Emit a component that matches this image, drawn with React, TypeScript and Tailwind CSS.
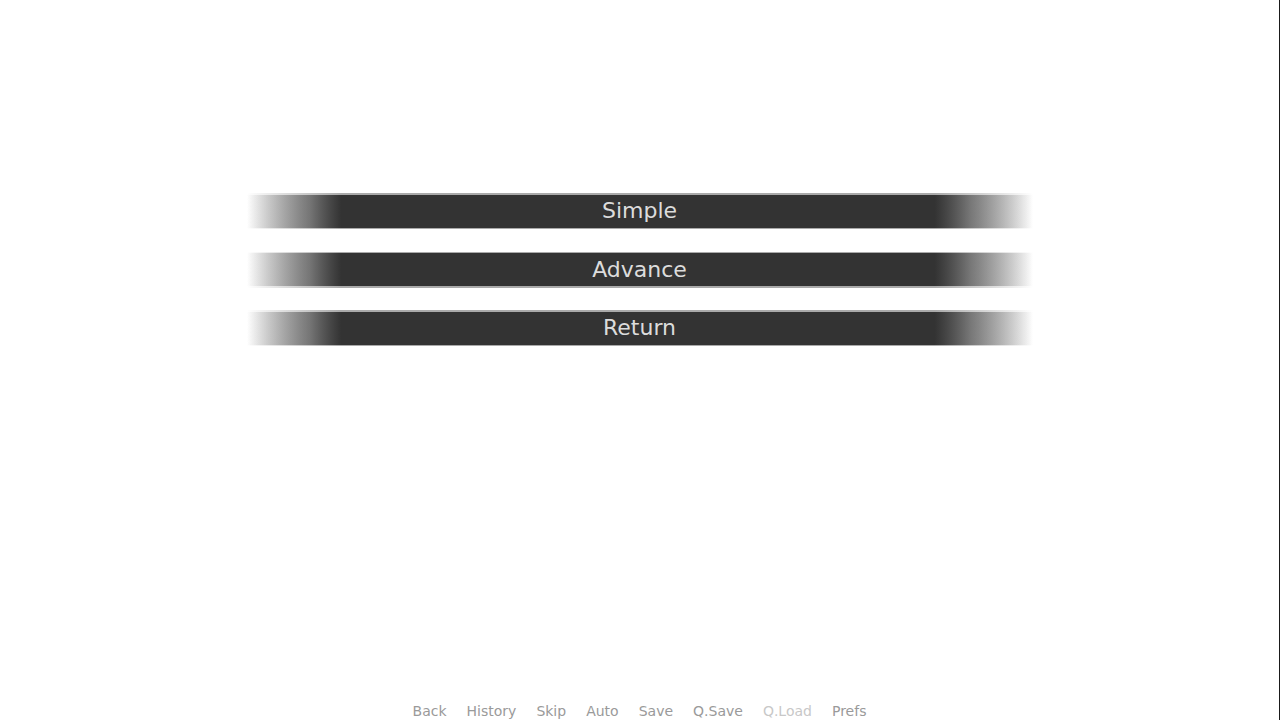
import React from "react";

const items = ["Simple", "Advance", "Return"];
const nav: { label: string; dim?: boolean }[] = [
  { label: "Back" },
  { label: "History" },
  { label: "Skip" },
  { label: "Auto" },
  { label: "Save" },
  { label: "Q.Save" },
  { label: "Q.Load", dim: true },
  { label: "Prefs" },
];

export default function App() {
  return (
    <div
      className="relative flex h-[720px] w-[1280px] flex-col overflow-hidden border-r border-r-[#1a1a1a] bg-white"
      style={{ fontFamily: '"DejaVu Sans", Verdana, sans-serif' }}
    >
      <div className="flex flex-col items-center gap-[22.5px] pt-[193px]">
        {items.map((t) => (
          <div
            key={t}
            className="w-[786px] bg-[linear-gradient(to_right,rgba(190,190,190,0)_0%,rgba(170,170,170,1)_12%,rgba(170,170,170,1)_87.5%,rgba(190,190,190,0)_100%)] py-[1.5px]"
          >
            <div className="flex h-[33px] items-center justify-center bg-[linear-gradient(to_right,rgba(51,51,51,0)_0%,rgba(51,51,51,0.55)_8%,rgba(51,51,51,1)_12%,rgba(51,51,51,1)_87.5%,rgba(51,51,51,0.55)_92%,rgba(51,51,51,0)_100%)] text-[22px] leading-none text-[#dcdcdc]">
              {t}
            </div>
          </div>
        ))}
      </div>
      <div className="flex-1" />
      <div className="flex h-[18px] items-center justify-center gap-[20px] pb-[0px] text-[14px] leading-[17px]">
        {nav.map((n) => (
          <span key={n.label} className={n.dim ? "text-[#c8c8c8]" : "text-[#9a9a9a]"}>
            {n.label}
          </span>
        ))}
      </div>
    </div>
  );
}
